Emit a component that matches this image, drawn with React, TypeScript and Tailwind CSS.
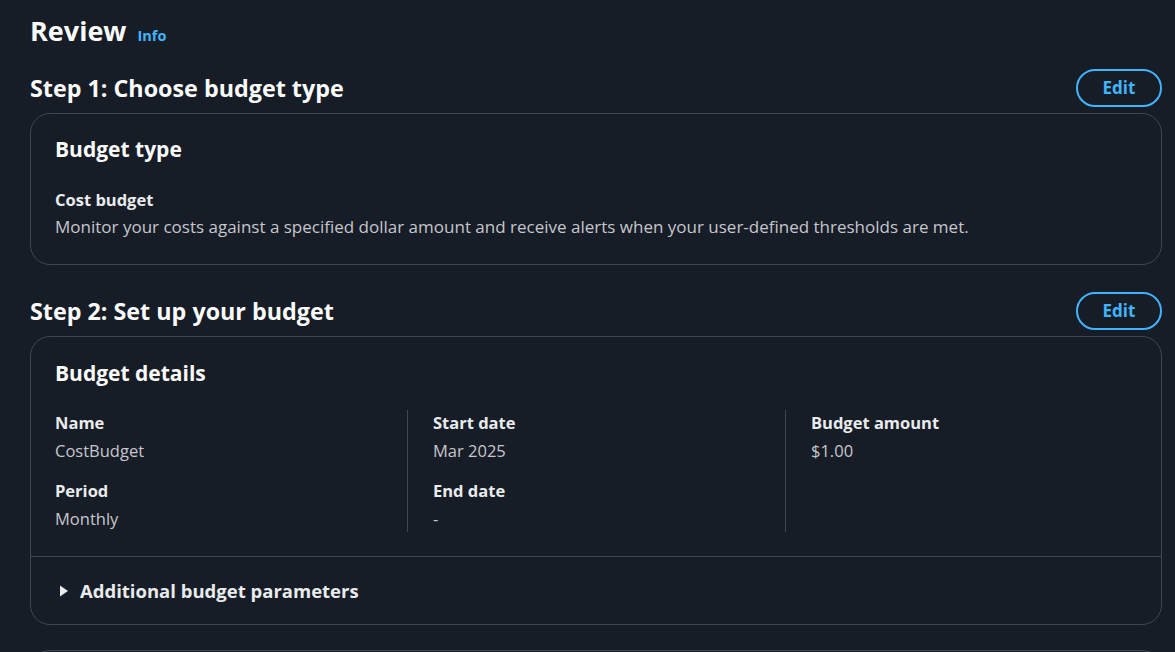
const font = { fontFamily: '"Open Sans", "Noto Sans", Arial, sans-serif' };

function EditButton() {
  return (
    <button className="h-[38px] w-[86px] rounded-full border-2 border-[#42b4ff] text-[17px] font-bold text-[#42b4ff]">
      Edit
    </button>
  );
}

function StepHeader({ title }: { title: string }) {
  return (
    <div className="flex items-center justify-between">
      <h2 className="text-[23.3px] font-bold leading-[30px] text-[#fbfbfb]">{title}</h2>
      <EditButton />
    </div>
  );
}

function Field({ label, value }: { label: string; value: string }) {
  return (
    <div>
      <div className="text-[16.5px] font-bold leading-[24px] text-[#e9ebed]">{label}</div>
      <div className="mt-[4px] text-[16.5px] leading-[24px] text-[#c6c6cd]">{value}</div>
    </div>
  );
}

export default function App() {
  return (
    <div style={font} className="min-h-screen w-full overflow-hidden bg-[#161d26] pl-[30px] pr-[13px] pt-[14px]">
      <div className="flex items-baseline gap-[11px]">
        <h1 className="text-[27px] font-bold leading-[34px] text-[#fbfbfb]">Review</h1>
        <span className="text-[14.5px] font-bold text-[#42b4ff]">Info</span>
      </div>

      <div className="mt-[21px]">
        <StepHeader title="Step 1: Choose budget type" />
      </div>
      <div className="mt-[6px] h-[152px] rounded-[20px] border border-[#414750] px-[24px] pt-[20px]">
        <h3 className="text-[21px] font-bold leading-[30px] text-[#fbfbfb]">Budget type</h3>
        <div className="mt-[24px] text-[16.5px] font-bold leading-[24px] text-[#e9ebed]">Cost budget</div>
        <div className="mt-[3px] text-[17px] leading-[24px] text-[#c6c6cd]">
          Monitor your costs against a specified dollar amount and receive alerts when your user-defined thresholds are met.
        </div>
      </div>

      <div className="mt-[27px]">
        <StepHeader title="Step 2: Set up your budget" />
      </div>
      <div className="mt-[6px] h-[289px] rounded-[20px] border border-[#414750]">
        <div className="px-[24px] pt-[21px]">
          <h3 className="text-[21px] font-bold leading-[30px] text-[#fbfbfb]">Budget details</h3>
          <div className="mt-[22px] grid grid-cols-[352px_378px_1fr]">
            <div className="flex flex-col gap-[16px] py-[1px]">
              <Field label="Name" value="CostBudget" />
              <Field label="Period" value="Monthly" />
            </div>
            <div className="flex flex-col gap-[16px] border-l border-[#414750] py-[1px] pl-[25px]">
              <Field label="Start date" value="Mar 2025" />
              <Field label="End date" value="-" />
            </div>
            <div className="flex flex-col gap-[16px] border-l border-[#414750] py-[1px] pl-[25px]">
              <Field label="Budget amount" value="$1.00" />
            </div>
          </div>
        </div>
        <div className="mt-[24px] border-t border-[#414750]" />
        <div className="flex items-center gap-[11px] px-[28px] pt-[20px]">
          <svg width="10" height="12" viewBox="0 0 10 12">
            <path d="M1 0.5 L9 6 L1 11.5 Z" fill="#e9ebed" />
          </svg>
          <span className="text-[18.5px] font-bold leading-[28px] text-[#e9ebed]">Additional budget parameters</span>
        </div>
      </div>
      <div className="mt-[25px] h-[60px] rounded-[20px] border border-[#414750]" />
    </div>
  );
}
